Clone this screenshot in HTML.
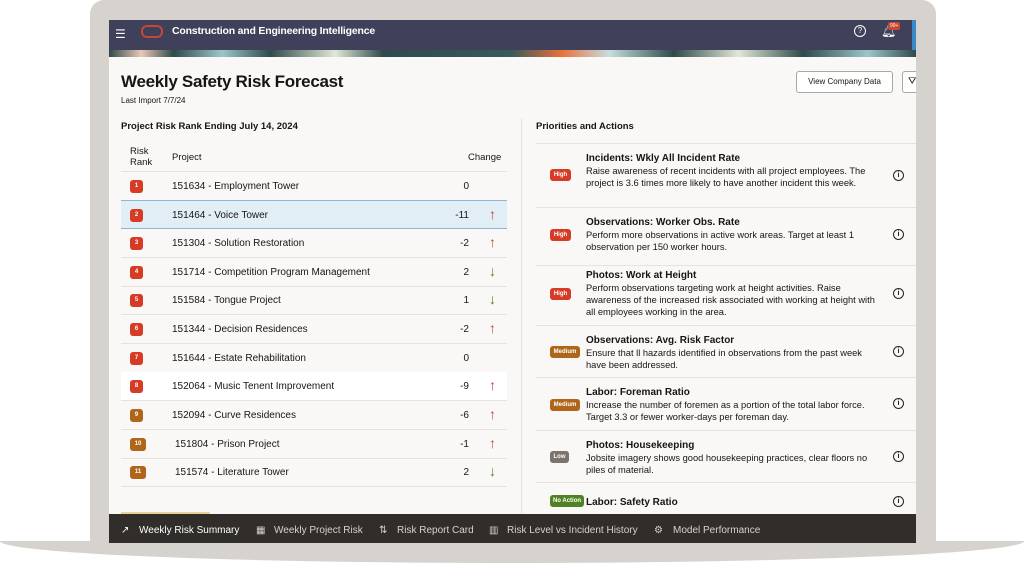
<!DOCTYPE html>
<html><head><style>
*{margin:0;padding:0;box-sizing:border-box}
body{width:1024px;height:563px;background:#fff;font-family:"Liberation Sans",sans-serif;position:relative;overflow:hidden;color:#161513}
.lid{position:absolute;left:90px;top:0;width:846px;height:548px;background:#d6d3ce;border-radius:14px 14px 0 0}
.base{position:absolute;left:0;top:541px;width:1024px;height:22px;background:#d6d3ce;border-radius:0 0 50% 50%/0 0 100% 100%}
.screen{position:absolute;left:109px;top:20px;width:807px;height:523px;background:#f9f8f6;overflow:hidden}
.hdr{position:absolute;left:0;top:0;width:807px;height:30px;background:#3e4159;color:#fff}
.band{position:absolute;left:0;top:30px;width:807px;height:7px;background:linear-gradient(90deg,#2f4a4a 0,#e9c9b6 4%,#2f4a4a 8%,#9bc7c9 14%,#2f4a4a 20%,#e0e8d8 28%,#2f4a4a 34%,#3a5a5a 50%,#e8703a 56%,#c5dede 62%,#2f4a4a 70%,#e0e8d8 78%,#2f4a4a 86%,#9bc7c9 94%,#2f4a4a)}
.abs{position:absolute}
.row{position:absolute;left:12px;width:386px;height:29px;border-bottom:1px solid #e6e3df;font-size:10px}
.badge{position:absolute;left:9px;top:8px;width:13px;height:13px;border-radius:3px;color:#fff;font-size:6px;text-align:center;line-height:13px;font-weight:bold}
.row .p{position:absolute;left:51px;top:9px}
.row .c{position:absolute;right:38px;top:9px}
.row .a{position:absolute;right:11px;top:5px;font-size:14px}
.up{color:#c74634}.dn{color:#508223}
.it{position:absolute;left:427px;width:380px;border-top:1px solid #e6e3df;font-size:9.3px;line-height:12px}
.it b{font-size:10px}
.tag{position:absolute;left:14px;height:12px;border-radius:3px;color:#fff;font-size:6px;font-weight:bold;line-height:12px;text-align:center}
.it .tx{position:absolute;left:50px;width:290px}
.info{position:absolute;left:357px;width:11px;height:11px;border:1.2px solid #222;border-radius:50%;font-size:7px;text-align:center;line-height:9px;font-weight:bold}
.tabs{position:absolute;left:0;top:494px;width:807px;height:29px;background:#312d2a;color:#d6d3ce;font-size:10px}
.tabs span{position:absolute;top:11px}
</style></head><body>
<div class="lid"></div>
<div class="base"></div>
<div class="screen">
 <div class="hdr">
  <div class="abs" style="left:6px;top:7px;font-size:12px">☰</div>
  <div class="abs" style="left:32px;top:5px;width:22px;height:13px;border:2.5px solid #c74634;border-radius:6px"></div>
  <div class="abs" style="left:63px;top:5px;font-size:10.5px;font-weight:bold;letter-spacing:-0.2px">Construction and Engineering Intelligence</div>
  <div class="abs" style="left:745px;top:5px;width:12px;height:12px;border:1.3px solid #fff;border-radius:50%;font-size:8px;text-align:center;line-height:10px">?</div>
  <div class="abs" style="left:772px;top:4px;font-size:12px">🔔︎</div>
  <div class="abs" style="left:779px;top:2px;background:#c74634;font-size:5px;padding:1px 2px;border-radius:2px">99+</div>
  <div class="abs" style="left:803px;top:0;width:4px;height:30px;background:#3a8ac8"></div>
 </div>
 <div class="band"></div>
 <div class="abs" style="left:12px;top:52px;font-size:17px;font-weight:bold;letter-spacing:-0.3px">Weekly Safety Risk Forecast</div>
 <div class="abs" style="left:12px;top:76px;font-size:8px">Last Import 7/7/24</div>
 <div class="abs" style="left:687px;top:51px;width:97px;height:22px;border:1px solid #a9a6a2;border-radius:3px;background:#fff;font-size:8px;text-align:center;line-height:20px">View Company Data</div>
 <div class="abs" style="left:793px;top:51px;width:20px;height:22px;border:1px solid #a9a6a2;border-radius:3px;background:#fff;font-size:10px;padding-left:5px;line-height:20px">⛛</div>
 <div class="abs" style="left:12px;top:101px;font-size:9.5px;font-weight:bold">Project Risk Rank Ending July 14, 2024</div>
 <div class="abs" style="left:427px;top:101px;font-size:9.5px;font-weight:bold">Priorities and Actions</div>
 <div class="abs" style="left:412px;top:98px;width:1px;height:396px;background:#e6e3df"></div>
 <div class="abs" style="left:21px;top:126px;font-size:9.5px;line-height:11px">Risk<br>Rank</div>
 <div class="abs" style="left:63px;top:132px;font-size:9.5px">Project</div>
 <div class="abs" style="left:359px;top:132px;font-size:9.5px">Change</div>
 <div class="abs" style="left:12px;top:151px;width:386px;height:1px;background:#e6e3df"></div>

 <div class="row" style="top:152px"><div class="badge" style="background:#d63b25">1</div><div class="p">151634 - Employment Tower</div><div class="c">0</div></div>
 <div class="row" style="top:180px;background:#e1eef6;border-top:1px solid #8fb8d0;border-bottom:1px solid #8fb8d0"><div class="badge" style="background:#d63b25">2</div><div class="p">151464 - Voice Tower</div><div class="c">-11</div><div class="a up">↑</div></div>
 <div class="row" style="top:209px"><div class="badge" style="background:#d63b25">3</div><div class="p">151304 - Solution Restoration</div><div class="c">-2</div><div class="a up">↑</div></div>
 <div class="row" style="top:238px"><div class="badge" style="background:#d63b25">4</div><div class="p">151714 - Competition Program Management</div><div class="c">2</div><div class="a dn">↓</div></div>
 <div class="row" style="top:266px"><div class="badge" style="background:#d63b25">5</div><div class="p">151584 - Tongue Project</div><div class="c">1</div><div class="a dn">↓</div></div>
 <div class="row" style="top:295px"><div class="badge" style="background:#d63b25">6</div><div class="p">151344 - Decision Residences</div><div class="c">-2</div><div class="a up">↑</div></div>
 <div class="row" style="top:324px"><div class="badge" style="background:#d63b25">7</div><div class="p">151644 - Estate Rehabilitation</div><div class="c">0</div></div>
 <div class="row" style="top:352px;background:#fff"><div class="badge" style="background:#d63b25">8</div><div class="p">152064 - Music Tenent Improvement</div><div class="c">-9</div><div class="a up">↑</div></div>
 <div class="row" style="top:381px"><div class="badge" style="background:#b0661a">9</div><div class="p">152094 - Curve Residences</div><div class="c">-6</div><div class="a up">↑</div></div>
 <div class="row" style="top:410px"><div class="badge" style="background:#b0661a;width:16px">10</div><div class="p" style="left:54px">151804 - Prison Project</div><div class="c">-1</div><div class="a up">↑</div></div>
 <div class="row" style="top:438px"><div class="badge" style="background:#b0661a;width:16px">11</div><div class="p" style="left:54px">151574 - Literature Tower</div><div class="c">2</div><div class="a dn">↓</div></div>

 <div class="it" style="top:123px;height:65px"><div class="tag" style="top:25px;width:21px;background:#d63b25">High</div><div class="tx" style="top:8px"><b>Incidents: Wkly All Incident Rate</b><br>Raise awareness of recent incidents with all project employees. The project is 3.6 times more likely to have another incident this week.</div><div class="info" style="top:26px">i</div></div>
 <div class="it" style="top:187px;height:59px"><div class="tag" style="top:21px;width:21px;background:#d63b25">High</div><div class="tx" style="top:8px"><b>Observations: Worker Obs. Rate</b><br>Perform more observations in active work areas. Target at least 1 observation per 150 worker hours.</div><div class="info" style="top:21px">i</div></div>
 <div class="it" style="top:245px;height:60px"><div class="tag" style="top:22px;width:21px;background:#d63b25">High</div><div class="tx" style="top:3px"><b>Photos: Work at Height</b><br>Perform observations targeting work at height activities. Raise awareness of the increased risk associated with working at height with all employees working in the area.</div><div class="info" style="top:22px">i</div></div>
 <div class="it" style="top:305px;height:52px"><div class="tag" style="top:20px;width:30px;background:#b0661a">Medium</div><div class="tx" style="top:8px"><b>Observations: Avg. Risk Factor</b><br>Ensure that ll hazards identified in observations from the past week have been addressed.</div><div class="info" style="top:20px">i</div></div>
 <div class="it" style="top:357px;height:53px"><div class="tag" style="top:21px;width:30px;background:#b0661a">Medium</div><div class="tx" style="top:8px"><b>Labor: Foreman Ratio</b><br>Increase the number of foremen as a portion of the total labor force. Target 3.3 or fewer worker-days per foreman day.</div><div class="info" style="top:20px">i</div></div>
 <div class="it" style="top:410px;height:52px"><div class="tag" style="top:20px;width:19px;background:#7a736e">Low</div><div class="tx" style="top:8px"><b>Photos: Housekeeping</b><br>Jobsite imagery shows good housekeeping practices, clear floors no piles of material.</div><div class="info" style="top:20px">i</div></div>
 <div class="it" style="top:462px;height:32px"><div class="tag" style="top:12px;width:34px;background:#508223">No Action</div><div class="tx" style="top:13px"><b>Labor: Safety Ratio</b></div><div class="info" style="top:13px">i</div></div>

 <div class="abs" style="left:12px;top:492px;width:89px;height:2px;background:#e8d49a"></div>
 <div class="tabs">
  <span style="left:12px;color:#fff">↗</span><span style="left:30px;color:#fff">Weekly Risk Summary</span>
  <span style="left:147px">▦</span><span style="left:165px">Weekly Project Risk</span>
  <span style="left:270px">⇅</span><span style="left:288px">Risk Report Card</span>
  <span style="left:380px">▥</span><span style="left:398px">Risk Level vs Incident History</span>
  <span style="left:545px">⚙</span><span style="left:564px">Model Performance</span>
 </div>
</div>
</body></html>
